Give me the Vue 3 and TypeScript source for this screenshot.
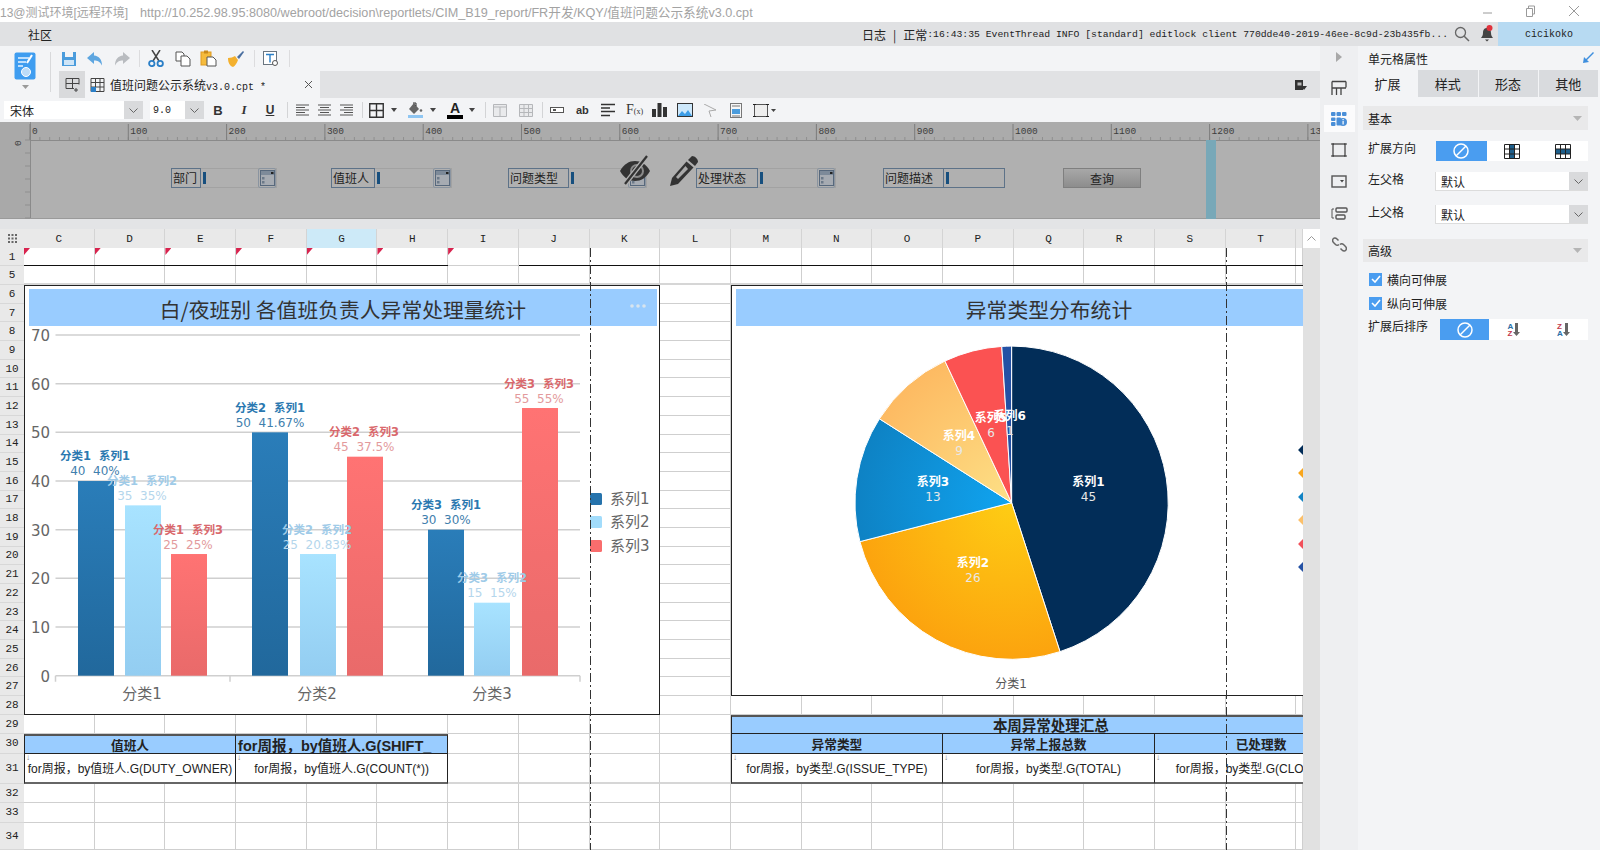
<script setup lang="ts">
const columns = ['C','D','E','F','G','H','I','J','K','L','M','N','O','P','Q','R','S','T','']
const rowLabels = [1,5,6,7,8,9,10,11,12,13,14,15,16,17,18,19,20,21,22,23,24,25,26,27,28,29,30,31,32,33,34]

interface Cell { key: string; row: number; col: number; flag: boolean; thick: boolean }
const cells: Cell[] = []
rowLabels.forEach((r, ri) => {
  columns.forEach((_c, ci) => {
    cells.push({ key: r + '-' + ci, row: ri + 2, col: ci + 2, flag: r === 1 && ci < 7, thick: r === 31 || r === 5 })
  })
})

const widgets = [
  { x: 171, label: '部门', lw: 30, w: 106, kind: 'combo' },
  { x: 331, label: '值班人', lw: 44, w: 121, kind: 'combo' },
  { x: 508, label: '问题类型', lw: 61, w: 139, kind: 'combo' },
  { x: 696, label: '处理状态', lw: 62, w: 140, kind: 'combo' },
  { x: 883, label: '问题描述', lw: 61, w: 122, kind: 'text' }
]

const rulerX = (n: number) => 30 + n * 0.983
const rulerMajors = Array.from({ length: 14 }, (_, i) => i * 100)
const rulerMinors = Array.from({ length: 131 }, (_, i) => i * 10)
const leftTicks = [0, 1, 2, 3, 4, 5, 6]

const yAxis = [70, 60, 50, 40, 30, 20, 10, 0]
const yOf = (v: number) => 675.7 - v * 4.867

interface Bar { x: number; v: number; s: number; cx: number; ly: number; t1: string; t2: string }
const bars: Bar[] = [
  { x: 78, v: 40, s: 0, cx: 95, ly: 456, t1: '分类1  系列1', t2: '40  40%' },
  { x: 125, v: 35, s: 1, cx: 142, ly: 481, t1: '分类1  系列2', t2: '35  35%' },
  { x: 171, v: 25, s: 2, cx: 188, ly: 530, t1: '分类1  系列3', t2: '25  25%' },
  { x: 252, v: 50, s: 0, cx: 270, ly: 408, t1: '分类2  系列1', t2: '50  41.67%' },
  { x: 300, v: 25, s: 1, cx: 317, ly: 530, t1: '分类2  系列2', t2: '25  20.83%' },
  { x: 347, v: 45, s: 2, cx: 364, ly: 432, t1: '分类2  系列3', t2: '45  37.5%' },
  { x: 428, v: 30, s: 0, cx: 446, ly: 505, t1: '分类3  系列1', t2: '30  30%' },
  { x: 474, v: 15, s: 1, cx: 492, ly: 578, t1: '分类3  系列2', t2: '15  15%' },
  { x: 522, v: 55, s: 2, cx: 539, ly: 384, t1: '分类3  系列3', t2: '55  55%' }
]
const labelHead = ['#2a78b0', '#9fcbe8', '#d9686c']
const labelSub = ['#3f80ad', '#b4d6ec', '#e39a9c']
const barFill = ['url(#barA)', 'url(#barB)', 'url(#barC)']

const legend = [
  { y: 499, c: '#2673ac', t: '系列1' },
  { y: 522, c: '#a2dcfb', t: '系列2' },
  { y: 546, c: '#f96d6d', t: '系列3' }
]

const cx = 1011.6
const cy = 502.7
const rad = 156.6
const pieData = [
  { v: 45, fill: '#022d58' },
  { v: 26, fill: 'url(#pieB)' },
  { v: 13, fill: 'url(#pieC)' },
  { v: 9, fill: 'url(#pieD)' },
  { v: 6, fill: '#fb5252' },
  { v: 1, fill: '#2451a4' }
]
let acc = 0
const slices = pieData.map((p) => {
  const a0 = (acc / 100) * Math.PI * 2
  acc += p.v
  const a1 = (acc / 100) * Math.PI * 2
  const x0 = cx + rad * Math.sin(a0)
  const y0 = cy - rad * Math.cos(a0)
  const x1 = cx + rad * Math.sin(a1)
  const y1 = cy - rad * Math.cos(a1)
  const large = a1 - a0 > Math.PI ? 1 : 0
  return { d: `M${cx} ${cy}L${x0.toFixed(2)} ${y0.toFixed(2)}A${rad} ${rad} 0 ${large} 1 ${x1.toFixed(2)} ${y1.toFixed(2)}Z`, fill: p.fill }
})
const pieLabels = [
  { x: 1088.5, y: 482, t: '系列1', v: '45' },
  { x: 973, y: 563, t: '系列2', v: '26' },
  { x: 933, y: 482, t: '系列3', v: '13' },
  { x: 959, y: 436, t: '系列4', v: '9' },
  { x: 991, y: 418, t: '系列5', v: '6' },
  { x: 1009.7, y: 416, t: '系列6', v: '1' }
]
const pieLegend = [
  { y: 450, c: '#022d58' },
  { y: 473, c: '#f9a61c' },
  { y: 497, c: '#1183c4' },
  { y: 520, c: '#fcc06a' },
  { y: 544, c: '#f2505a' },
  { y: 567, c: '#2451a4' }
]
</script>

<template>
  <div class="app">
    <div class="titlebar">
      <span class="t-id">13@测试环境[远程环境]</span>
      <span class="t-url">http://10.252.98.95:8080/webroot/decision\reportlets/CIM_B19_report/FR开发/KQY/值班问题公示系统v3.0.cpt</span>
      <div class="winbtns">
        <svg width="11" height="11" viewBox="0 0 11 11"><path d="M1 7h9" stroke="#9a9a9a" fill="none" /></svg>
        <svg width="11" height="12" viewBox="0 0 11 12"><path d="M1.5 3.5h6v8h-6zM3.5 3.5V1h6v8H7.5" stroke="#9a9a9a" fill="none" /></svg>
        <svg width="12" height="12" viewBox="0 0 12 12"><path d="M1 1l10 10M11 1L1 11" stroke="#9a9a9a" fill="none" /></svg>
      </div>
    </div>

    <div class="menubar">
      <span class="menu-item">社区</span>
      <div class="log">
        <span class="cjk">日志</span><span class="pipe">|</span><span class="cjk">正常</span><span class="lat">:16:43:35 EventThread INFO [standard] editlock client 770dde40-2019-46ee-8c9d-23b435fb...</span>
      </div>
      <svg class="m-search" width="16" height="16" viewBox="0 0 16 16"><circle cx="6.5" cy="6.5" r="5" fill="none" stroke="#666" stroke-width="1.3" /><path d="M10.2 10.2L15 15" stroke="#666" stroke-width="1.5" /></svg>
      <svg class="m-bell" width="16" height="18" viewBox="0 0 16 18"><path d="M8 3c-3 0-4 2.300-4 5 0 3-1.500 4-2 5h12c-.5-1-2-2-2-5 0-2.700-1-5-4-5z" fill="#444" /><path d="M6 14.500h4l-2 2z" fill="#444" /><circle cx="10.500" cy="3" r="3" fill="#e0323c" /></svg>
      <div class="user">cicikoko</div>
    </div>

    <div class="main">
      <div class="work">
        <div class="tophead">
          <div class="logo-col">
            <svg width="22" height="28" viewBox="0 0 22 28">
              <rect x="0.500" y="0.500" width="21" height="27" rx="2" fill="#3f9df0" />
              <path d="M4 6h11M4 10h8M4 14h5" stroke="#e8f4ff" stroke-width="1.600" />
              <path d="M18 3l-5 8" stroke="#fff" stroke-width="2" />
              <circle cx="12" cy="20" r="4.500" fill="#bcdcf8" stroke="#fff" />
            </svg>
            <svg class="logo-caret" width="7" height="4" viewBox="0 0 7 4"><path d="M0 0h7L3.500 4z" fill="#9a9a9a" /></svg>
          </div>
          <div class="head-right">
            <div class="toolbar">
              <svg class="ml10" width="16" height="16" viewBox="0 0 16 16"><path d="M1 1h14v14H1z" fill="#4b9cdc" /><rect x="4" y="1" width="8" height="5" fill="#f3f4f6" /><rect x="3" y="9" width="10" height="5" fill="#cfe5f7" /></svg>
              <svg class="ml10" width="16" height="14" viewBox="0 0 16 14"><path d="M7 0L0 6l7 6V8.500c3.500 0 6 1 8 5 0-6-3-9.500-8-10z" fill="#5ea6e0" /></svg>
              <svg class="ml11" width="16" height="14" viewBox="0 0 16 14"><path d="M9 0l7 6-7 6V8.500c-3.500 0-6 1-8 5 0-6 3-9.500 8-10z" fill="#b9bcc0" /></svg>
              <div class="vsep ml9"></div>
              <svg class="ml8" width="16" height="17" viewBox="0 0 16 17"><path d="M4 0l7 11M12 0L5 11" stroke="#444" stroke-width="1.500" fill="none" /><circle cx="3.800" cy="13.500" r="2.700" fill="none" stroke="#2b7fc7" stroke-width="1.800" /><circle cx="12.200" cy="13.500" r="2.700" fill="none" stroke="#2b7fc7" stroke-width="1.800" /></svg>
              <svg class="ml11" width="16" height="16" viewBox="0 0 16 16"><path d="M1 1h6l2 2v7H1z" fill="#fff" stroke="#555" /><path d="M6 5h6l3 3v7H6z" fill="#fff" stroke="#555" /></svg>
              <svg class="ml9" width="17" height="17" viewBox="0 0 17 17"><rect x="1" y="2" width="10" height="13" fill="#f5bb3c" stroke="#e09a20" /><rect x="4" y="0.500" width="4" height="3" fill="#c98a1c" /><path d="M7 7h6l3 3v6H7z" fill="#fff" stroke="#555" /></svg>
              <svg class="ml11" width="16" height="16" viewBox="0 0 16 16"><path d="M0 7c3 0 5-1 7-2l3 4c-1 3-3 6-5 7-3-1-5-4-5-9z" fill="#f3b02e" /><path d="M9 6l6-6 1 1-5 7z" fill="#4a6fa0" /></svg>
              <div class="vsep ml10"></div>
              <svg class="ml8" width="16" height="16" viewBox="0 0 16 16"><rect x="0.500" y="0.500" width="13" height="13" fill="#fff" stroke="#6a7580" /><path d="M3 3.500h8M7 3.500v8" stroke="#2b7fc7" stroke-width="1.400" /><circle cx="12" cy="12" r="2.500" fill="#fff" stroke="#555" /></svg>
              <div class="vsep ml10"></div>
            </div>
            <div class="tabrow">
              <div class="subtab">
                <svg width="15" height="15" viewBox="0 0 15 15"><path d="M1 1.500h13M1 1.500v10M7.500 1.500v10M14 1.500v6M1 6.500h13M1 11.500h8M11 11v4M9 13h4" stroke="#444" fill="none" /></svg>
              </div>
              <div class="activetab">
                <svg width="15" height="14" viewBox="0 0 15 14"><path d="M1 .5h13v13H1zM1 4.500h13M5.500 .5v13M10 .5v13M1 9h13" stroke="#444" fill="none" /><rect x="1" y="9" width="5" height="5" fill="#2b7fc7" /></svg>
                <span class="tabname">值班问题公示系统<span class="lat10">v3.0.cpt *</span></span>
                <svg class="tabx" width="9" height="9" viewBox="0 0 9 9"><path d="M1 1l7 7M8 1L1 8" stroke="#555" fill="none" /></svg>
              </div>
              <svg class="rowicon" width="12" height="11" viewBox="0 0 12 11"><rect x="0" y="0" width="8" height="10" fill="#333" /><rect x="2.500" y="2.500" width="4" height="3" fill="#bbb" /><path d="M6 6h6L9 10z" fill="#333" /></svg>
            </div>
          </div>
        </div>

        <div class="fmt">
          <div class="sel sel-font"><span>宋体</span><i class="sel-arrow"><svg width="9" height="5" viewBox="0 0 9 5"><path d="M.5.500l4 4 4-4" stroke="#666" fill="none" /></svg></i></div>
          <div class="sel sel-size"><span class="lat10">9.0</span><i class="sel-arrow"><svg width="9" height="5" viewBox="0 0 9 5"><path d="M.5.500l4 4 4-4" stroke="#666" fill="none" /></svg></i></div>
          <span class="fb fb-b">B</span><span class="fb fb-i">I</span><span class="fb fb-u">U</span>
          <div class="vsep ml4 short"></div>
          <svg class="ml8" width="13" height="12" viewBox="0 0 13 12"><path d="M0 1h13M0 3.500h9M0 6h13M0 8.500h9M0 11h13" stroke="#555" /></svg>
          <svg class="ml9" width="13" height="12" viewBox="0 0 13 12"><path d="M0 1h13M2 3.500h9M0 6h13M2 8.500h9M0 11h13" stroke="#555" /></svg>
          <svg class="ml9" width="13" height="12" viewBox="0 0 13 12"><path d="M0 1h13M4 3.500h9M0 6h13M4 8.500h9M0 11h13" stroke="#555" /></svg>
          <div class="vsep ml9 short"></div>
          <svg class="ml6" width="15" height="15" viewBox="0 0 15 15"><path d="M.75.750h13.500v13.500H.75zM7.500.750v13.500M.75 7.500h13.500" stroke="#333" stroke-width="1.400" fill="none" /></svg>
          <svg class="ml7" width="6" height="4" viewBox="0 0 6 4"><path d="M0 0h6L3 4z" fill="#444" /></svg>
          <svg class="ml11" width="15" height="16" viewBox="0 0 15 16"><path d="M6 1L1 7l5 5 5-5z" fill="#666" /><path d="M5 1h3v3" stroke="#333" fill="none" /><circle cx="13" cy="8.500" r="1.300" fill="#666" /><rect x="0" y="13" width="15" height="3" fill="#8fc6f2" /></svg>
          <svg class="ml7" width="6" height="4" viewBox="0 0 6 4"><path d="M0 0h6L3 4z" fill="#444" /></svg>
          <div class="fb-a ml11"><span>A</span><i></i></div>
          <svg class="ml6" width="6" height="4" viewBox="0 0 6 4"><path d="M0 0h6L3 4z" fill="#444" /></svg>
          <div class="vsep ml10 short"></div>
          <svg class="ml7" width="14" height="13" viewBox="0 0 14 13"><path d="M.5.500h13v12H.5zM.5 3h13M7 3v9.500" stroke="#b5b7ba" fill="#e9eaec" /></svg>
          <svg class="ml12" width="14" height="13" viewBox="0 0 14 13"><path d="M.5.500h13v12H.5zM.5 4.500h13M.5 8.500h13M5 .5v12M9.500.500v12" stroke="#b5b7ba" fill="#e9eaec" /></svg>
          <div class="vsep ml9 short"></div>
          <svg class="ml7" width="14" height="6" viewBox="0 0 14 6"><rect x=".5" y=".5" width="13" height="5" fill="#fff" stroke="#555" /><rect x="3" y="2" width="3" height="2" fill="#555" /></svg>
          <span class="fb-ab ml12">ab</span>
          <svg class="ml13" width="14" height="14" viewBox="0 0 14 14"><path d="M0 1.500h14M0 5h9M0 8.500h14M0 12.500h9" stroke="#333" stroke-width="1.600" /></svg>
          <span class="fb-fx ml11">F<small>(x)</small></span>
          <svg class="ml10" width="15" height="14" viewBox="0 0 15 14"><path d="M0 6h4v8H0zM5.500 0h4v14h-4zM11 4h4v10h-4z" fill="#333" /></svg>
          <svg class="ml10" width="16" height="14" viewBox="0 0 16 14"><rect width="16" height="14" fill="#333" /><rect x="1" y="1" width="14" height="12" fill="#cde8fb" /><path d="M1 13l4-5 3 3 3-4 4 6z" fill="#3d9de6" /></svg>
          <svg class="ml10" width="14" height="13" viewBox="0 0 14 13"><path d="M1 0l12 6-7 1v0L8 13" stroke="#aaa" fill="none" /></svg>
          <svg class="ml13" width="12" height="15" viewBox="0 0 12 15"><rect x=".5" y=".5" width="11" height="14" fill="#f6f6f6" stroke="#777" /><rect x="2" y="6" width="8" height="5" fill="#4b9cdc" /><path d="M2 3h8M2 13h8" stroke="#777" /></svg>
          <svg class="ml11" width="16" height="15" viewBox="0 0 16 15"><rect x="1.500" y="1.500" width="13" height="12" fill="#eee" stroke="#555" /><path d="M0 1.500h3M13 1.500h3M0 13.500h3M13 13.500h3" stroke="#222" /></svg>
          <svg class="ml2" width="5" height="3" viewBox="0 0 5 3"><path d="M0 0h5L2.500 3z" fill="#444" /></svg>
        </div>

        <div class="pane">
          <svg class="ruler" width="1320" height="97" viewBox="0 122 1320 97">
            <rect x="0" y="122" width="30" height="97" fill="#a9a9a9" />
            <rect x="30" y="122" width="1290" height="18" fill="#ababab" />
            <path d="M30 140.500H1320M30.500 122V219" stroke="#8a8a8a" fill="none" />
            <path d="M0 218.500H1320" stroke="#9a9a9a" />
            <g v-for="n in rulerMinors" :key="n">
              <line :x1="rulerX(n)" :x2="rulerX(n)" y1="137" y2="140" stroke="#8f8f8f" />
            </g>
            <g v-for="n in rulerMajors" :key="'m' + n">
              <line :x1="rulerX(n)" :x2="rulerX(n)" y1="124" y2="140" stroke="#7d7d7d" />
              <text :x="rulerX(n) + 2" y="134" class="ruler-t">{{ n }}</text>
            </g>
            <g v-for="t in leftTicks" :key="'l' + t">
              <line x1="25" x2="30" :y1="140 + t * 13" :y2="140 + t * 13" stroke="#8f8f8f" />
            </g>
            <text class="ruler-t" transform="translate(21 146) rotate(-90)">0</text>
            <rect x="1206" y="140" width="10" height="79" fill="#78a8b8" />
          </svg>
          <div v-for="w in widgets" :key="w.label" class="widget" :style="{ left: w.x + 'px', width: w.w + 'px' }">
            <div class="w-label" :style="{ width: w.lw + 'px' }">{{ w.label }}</div>
            <div class="w-box" :class="{ 'w-text': w.kind === 'text' }">
              <i class="w-cursor"></i>
              <div v-if="w.kind === 'combo'" class="w-icon">
                <svg width="15" height="16" viewBox="0 0 15 16"><rect x=".5" y=".5" width="14" height="15" fill="#a6abb2" stroke="#57687c" /><rect x="1" y="1" width="13" height="4" fill="#7d8a99" /><rect x="11" y="2" width="2.500" height="2" fill="#222" /><rect x="2" y="7" width="2.500" height="2.500" fill="#6c7a89" /><rect x="2" y="11" width="2.500" height="2.500" fill="#6c7a89" /></svg>
              </div>
            </div>
          </div>
          <button class="query">查询</button>
          <svg class="eye" width="32" height="30" viewBox="0 0 32 30"><path d="M1 16c4-7 9-10 15-10s11 3 15 10c-4 7-9 10-15 10S5 23 1 16z" fill="#333" /><circle cx="18" cy="16" r="6" fill="none" stroke="#8a8a8a" stroke-width="2" /><path d="M28 1L6 29" stroke="#b0b0b0" stroke-width="5" /><path d="M28 1L6 29" stroke="#333" stroke-width="2.200" /></svg>
          <svg class="pencil" width="29" height="31" viewBox="0 0 29 31"><path d="M22 1c3 0 6 3 6 6l-3 4-7-6z" fill="#333" /><path d="M16.500 6.500l7 6L8 29l-8 2 2-8z" fill="#333" /><path d="M15.500 11L6 22l2 2 10-10z" fill="#a9a9a9" /></svg>
        </div>

        <div class="gap"></div>

        <div class="sheetwrap">
          <div class="sheet">
            <div class="corner"><svg width="9" height="9" viewBox="0 0 9 9"><path d="M0 1h2M3.500 1h2M7 1h2M0 4.500h2M3.500 4.500h2M7 4.500h2M0 8h2M3.500 8h2M7 8h2" stroke="#666" stroke-width="2" /></svg></div>
            <div v-for="(c, i) in columns" :key="'c' + i" class="colh" :class="{ 'col-on': c === 'G' }" :style="{ gridColumn: i + 2 }">{{ c }}</div>
            <div v-for="(r, i) in rowLabels" :key="'r' + r" class="rowh" :style="{ gridRow: i + 2 }">{{ r }}</div>
            <div
              v-for="c in cells"
              :key="c.key"
              class="cell"
              :class="{ thick: c.thick }"
              :style="{ gridRow: c.row, gridColumn: c.col }"
            >
              <i v-if="c.flag" class="flag"></i>
            </div>

            <div class="hline hl-a"></div>
            <div class="hline hl-b"></div>

            <div class="chart chart-bar">
              <svg width="634" height="428" viewBox="25 286 634 428">
                <defs>
                  <linearGradient id="barA" x1="0" y1="0" x2="0" y2="1"><stop offset="0" stop-color="#2a7db9" /><stop offset="1" stop-color="#21689c" /></linearGradient>
                  <linearGradient id="barB" x1="0" y1="0" x2="0" y2="1"><stop offset="0" stop-color="#a8e3ff" /><stop offset="1" stop-color="#93cdf1" /></linearGradient>
                  <linearGradient id="barC" x1="0" y1="0" x2="0" y2="1"><stop offset="0" stop-color="#ff7373" /><stop offset="1" stop-color="#e96a6a" /></linearGradient>
                </defs>
                <rect x="29" y="289" width="628" height="37" fill="#99ccff" />
                <text x="343" y="318" class="chart-title" text-anchor="middle">白/夜班别 各值班负责人异常处理量统计</text>
                <g fill="#d8e4ee"><circle cx="632" cy="306" r="1.800" /><circle cx="638" cy="306" r="1.800" /><circle cx="644" cy="306" r="1.800" /></g>
                <g v-for="v in yAxis" :key="'g' + v">
                  <line x1="55.500" x2="580" :y1="yOf(v)" :y2="yOf(v)" stroke="#cfcfcf" stroke-width="1.500" />
                  <text x="50" :y="yOf(v) + 6" class="axis-t" text-anchor="end">{{ v }}</text>
                </g>
                <path d="M55.500 675.700v6M230 675.700v6M580 675.700v6" stroke="#cfcfcf" stroke-width="1.500" />
                <rect v-for="b in bars" :key="'b' + b.t1" :x="b.x" :y="yOf(b.v)" width="36" :height="b.v * 4.867" :fill="barFill[b.s]" />
                <g v-for="b in bars" :key="'l' + b.t1">
                  <text :x="b.cx" :y="b.ly + 4" class="bar-h" text-anchor="middle" :fill="labelHead[b.s]" xml:space="preserve">{{ b.t1 }}</text>
                  <text :x="b.cx" :y="b.ly + 19" class="bar-s" text-anchor="middle" :fill="labelSub[b.s]" xml:space="preserve">{{ b.t2 }}</text>
                </g>
                <text x="142" y="699" class="axis-t" text-anchor="middle">分类1</text>
                <text x="317" y="699" class="axis-t" text-anchor="middle">分类2</text>
                <text x="492" y="699" class="axis-t" text-anchor="middle">分类3</text>
                <g v-for="l in legend" :key="l.t">
                  <rect x="590" :y="l.y - 6" width="12" height="12" rx="1.500" :fill="l.c" />
                  <text x="610" :y="l.y + 5" class="axis-t">{{ l.t }}</text>
                </g>
              </svg>
            </div>

            <div class="chart chart-pie">
              <svg width="572" height="409" viewBox="732 286 572 409">
                <defs>
                  <radialGradient id="pieB" gradientUnits="userSpaceOnUse" :cx="cx" :cy="cy" r="157"><stop offset="0" stop-color="#fecd14" /><stop offset="1" stop-color="#fca30e" /></radialGradient>
                  <radialGradient id="pieC" gradientUnits="userSpaceOnUse" :cx="cx" :cy="cy" r="157"><stop offset="0" stop-color="#10a4f0" /><stop offset="1" stop-color="#0e82c4" /></radialGradient>
                  <radialGradient id="pieD" gradientUnits="userSpaceOnUse" :cx="cx" :cy="cy" r="157"><stop offset="0" stop-color="#fde086" /><stop offset="1" stop-color="#fdba62" /></radialGradient>
                </defs>
                <rect x="736" y="289" width="570" height="37" fill="#99ccff" />
                <text x="1049" y="318" class="chart-title" text-anchor="middle">异常类型分布统计</text>
                <path v-for="s in slices" :key="s.d" :d="s.d" :fill="s.fill" stroke="#fff" stroke-width="1" />
                <g v-for="l in pieLabels" :key="l.t">
                  <text :x="l.x" :y="l.y + 4" class="pie-h" text-anchor="middle">{{ l.t }}</text>
                  <text :x="l.x" :y="l.y + 19" class="pie-v" text-anchor="middle">{{ l.v }}</text>
                </g>
                <text x="1011" y="688" class="pie-x" text-anchor="middle">分类1</text>
                <rect v-for="p in pieLegend" :key="p.y" x="1299.500" :y="p.y - 3.500" width="7" height="7" :fill="p.c" :transform="`rotate(45 1303 ${p.y})`" />
              </svg>
            </div>

            <div class="tc thead la">值班人</div>
            <div class="tc thead lb">for周报，by值班人.G(SHIFT_</div>
            <div class="tc tbody lc"><i class="down">↓</i>for周报，by值班人.G(DUTY_OWNER)</div>
            <div class="tc tbody ld"><i class="down">↓</i>for周报，by值班人.G(COUNT(*))</div>

            <div class="tc thead ra"><span class="clipwide">本周异常处理汇总</span></div>
            <div class="tc thead rb">异常类型</div>
            <div class="tc thead rc">异常上报总数</div>
            <div class="tc thead rd"><span class="clipin">已处理数</span></div>
            <div class="tc tbody re"><i class="down">↓</i>for周报，by类型.G(ISSUE_TYPE)</div>
            <div class="tc tbody rf"><i class="down">↓</i>for周报，by类型.G(TOTAL)</div>
            <div class="tc tbody rg"><i class="down">↓</i><span class="clipbody">for周报，by类型.G(CLOSED)</span></div>

            <div class="dash dash-a"></div>
            <div class="dash dash-b"></div>
          </div>
          <div class="vscroll">
            <div class="vs-up"><svg width="9" height="5" viewBox="0 0 9 5"><path d="M.5 4.500l4-4 4 4" stroke="#999" fill="none" /></svg></div>
          </div>
        </div>
      </div>

      <div class="iconcol">
        <svg class="ic-top" width="6" height="10" viewBox="0 0 6 10"><path d="M0 0l6 5-6 5z" fill="#a8a8a8" /></svg>
        <div class="ic"><svg width="16" height="16" viewBox="0 0 16 16"><path d="M1 1.500h14M1 1.500V15M15 1.500v6M1 8h14M5.500 8v7M10 8v7" stroke="#444" stroke-width="1.300" fill="none" /></svg></div>
        <div class="ic ic-on"><svg width="16" height="16" viewBox="0 0 16 16"><g fill="#4a8fd8"><rect x="0" y="1" width="4.500" height="4" rx="1" /><rect x="5.500" y="1" width="4.500" height="4" rx="1" /><rect x="11" y="1" width="4.500" height="4" rx="1" /><rect x="0" y="6.500" width="4.500" height="3.500" rx="1" /><rect x="0" y="11" width="4.500" height="4" rx="1" /><rect x="5.500" y="6.500" width="4.500" height="8" rx="1" /><circle cx="12" cy="11" r="4" /></g><rect x="11.500" y="10" width="1.200" height="3.500" fill="#fff" /><rect x="11.500" y="8" width="1.200" height="1.200" fill="#fff" /></svg></div>
        <div class="ic"><svg width="16" height="16" viewBox="0 0 16 16"><rect x="2" y="2" width="12" height="12" fill="none" stroke="#555" stroke-width="1.400" /><path d="M0 2h3M13 2h3M0 14h3M13 14h3" stroke="#333" /></svg></div>
        <div class="ic"><svg width="16" height="13" viewBox="0 0 16 13"><rect x="1" y="1" width="14" height="11" fill="none" stroke="#555" stroke-width="1.400" /><path d="M9 5h4l-2 2.500z" fill="#444" /></svg></div>
        <div class="ic"><svg width="17" height="13" viewBox="0 0 17 13"><path d="M3 2H1v9h2" stroke="#555" fill="none" /><rect x="5" y="1" width="11" height="4" rx="1" fill="none" stroke="#555" stroke-width="1.400" /><rect x="5" y="8" width="9" height="4" rx="1" fill="none" stroke="#555" stroke-width="1.400" /></svg></div>
        <div class="ic"><svg width="15" height="15" viewBox="0 0 15 15"><path d="M6.500 3.500L5 2C3.500.5 1.500 1 1 2s-.5 2.500.5 3.500L3.500 7.500c1 1 2.500 1 3.500 0M8.500 11.500l1.500 1.500c1.500 1.500 3.500 1 4 0s.5-2.500-.5-3.500L11.500 7.500c-1-1-2.500-1-3.500 0" fill="none" stroke="#666" stroke-width="1.500" /></svg></div>
      </div>

      <div class="panel">
        <div class="p-head">
          <span>单元格属性</span>
          <svg width="12" height="12" viewBox="0 0 12 12"><path d="M11 0L4 7l-2-2-1 6 6-1-2-2 7-7z" fill="#3f8fde" /></svg>
        </div>
        <div class="p-tabs">
          <div class="p-tab on">扩展</div>
          <div class="p-tab">样式</div>
          <div class="p-tab">形态</div>
          <div class="p-tab">其他</div>
        </div>
        <div class="p-sec">
          <span>基本</span>
          <svg width="9" height="5" viewBox="0 0 9 5"><path d="M0 0h9L4.500 5z" fill="#b5b5b5" /></svg>
        </div>
        <div class="p-row r1">
          <span class="p-lab">扩展方向</span>
          <div class="seg seg-a">
            <div class="seg-i on"><svg width="16" height="16" viewBox="0 0 16 16"><circle cx="8" cy="8" r="7" fill="none" stroke="#fff" stroke-width="1.500" /><path d="M3 13L13 3" stroke="#fff" stroke-width="1.500" /></svg></div>
            <div class="seg-i"><svg width="16" height="15" viewBox="0 0 16 15"><rect x="5" y="0" width="6" height="15" fill="#1d5f8c" /><path d="M.5.500h15v14H.5zM.5 5h15M.5 10h15M5.500.500v14M10.500.500v14" stroke="#222" fill="none" /></svg></div>
            <div class="seg-i"><svg width="16" height="15" viewBox="0 0 16 15"><rect x="0" y="5" width="16" height="5" fill="#1d5f8c" /><path d="M.5.500h15v14H.5zM.5 5h15M.5 10h15M5.500.500v14M10.500.500v14" stroke="#222" fill="none" /></svg></div>
          </div>
        </div>
        <div class="p-row r2">
          <span class="p-lab">左父格</span>
          <div class="p-sel"><span>默认</span><i><svg width="9" height="5" viewBox="0 0 9 5"><path d="M.5.500l4 4 4-4" stroke="#666" fill="none" /></svg></i></div>
        </div>
        <div class="p-row r3">
          <span class="p-lab">上父格</span>
          <div class="p-sel"><span>默认</span><i><svg width="9" height="5" viewBox="0 0 9 5"><path d="M.5.500l4 4 4-4" stroke="#666" fill="none" /></svg></i></div>
        </div>
        <div class="p-sec s2">
          <span>高级</span>
          <svg width="9" height="5" viewBox="0 0 9 5"><path d="M0 0h9L4.500 5z" fill="#b5b5b5" /></svg>
        </div>
        <label class="p-chk c1"><i class="box"><svg width="10" height="8" viewBox="0 0 10 8"><path d="M1 4l3 3 5-6" stroke="#fff" stroke-width="1.600" fill="none" /></svg></i>横向可伸展</label>
        <label class="p-chk c2"><i class="box"><svg width="10" height="8" viewBox="0 0 10 8"><path d="M1 4l3 3 5-6" stroke="#fff" stroke-width="1.600" fill="none" /></svg></i>纵向可伸展</label>
        <div class="p-row r4">
          <span class="p-lab">扩展后排序</span>
          <div class="seg seg-b">
            <div class="seg-i on"><svg width="16" height="16" viewBox="0 0 16 16"><circle cx="8" cy="8" r="7" fill="none" stroke="#fff" stroke-width="1.500" /><path d="M3 13L13 3" stroke="#fff" stroke-width="1.500" /></svg></div>
            <div class="seg-i sort"><span class="az"><b class="up">A</b><b class="lo">Z</b></span><svg width="7" height="13" viewBox="0 0 7 13"><path d="M2 0h3v9h2l-3.500 4L0 9h2z" fill="#666" /></svg></div>
            <div class="seg-i sort"><span class="az"><b class="lo">Z</b><b class="up">A</b></span><svg width="7" height="13" viewBox="0 0 7 13"><path d="M2 0h3v9h2l-3.500 4L0 9h2z" fill="#666" /></svg></div>
          </div>
        </div>
      </div>
    </div>
  </div>
</template>

<style>
html, body { margin: 0; padding: 0; background: #f3f4f6; overflow: hidden; }
</style>

<style scoped>
.app {
  width: 1600px; height: 850px; overflow: hidden; display: flex; flex-direction: column;
  font-family: "Noto Sans CJK SC", "Noto Sans", sans-serif; font-size: 12px; color: #333; background: #f3f4f6;
}
i { font-style: normal; }
.ml2 { margin-left: 2px; } .ml4 { margin-left: 4px; } .ml6 { margin-left: 6px; } .ml7 { margin-left: 7px; }
.ml8 { margin-left: 8px; } .ml9 { margin-left: 9px; } .ml10 { margin-left: 10px; } .ml11 { margin-left: 11px; }
.ml12 { margin-left: 12px; } .ml13 { margin-left: 13px; }

.titlebar { height: 22px; background: #fff; display: flex; align-items: center; color: #a3a3a3; flex: none; white-space: nowrap; }
.t-id { width: 140px; overflow: hidden; font-size: 12px; font-family: "Liberation Sans", "Noto Sans CJK SC", sans-serif; }
.t-url { font-size: 12.65px; font-family: "Liberation Sans", "Noto Sans CJK SC", sans-serif; }
.winbtns { margin-left: auto; display: flex; gap: 32px; padding-right: 20px; align-items: center; }

.menubar { height: 24px; background: #e0e1e3; display: flex; align-items: center; flex: none; }
.menu-item { margin-left: 28px; font-size: 12px; color: #222; }
.log { margin-left: auto; display: flex; align-items: center; color: #222; white-space: nowrap; }
.log .cjk { font-size: 12px; }
.log .pipe { margin: 0 7px; font-size: 12px; }
.log .lat { font-family: "Liberation Mono", monospace; font-size: 9.75px; }
.m-search { margin-left: 6px; }
.m-bell { margin-left: 9px; }
.user { width: 102px; margin-left: 3px; height: 24px; background: #b7daf2; display: flex; align-items: center; justify-content: center; font-family: "Liberation Mono", monospace; font-size: 10px; color: #222; }

.main { flex: 1; display: flex; min-height: 0; }
.work { width: 1320px; display: flex; flex-direction: column; flex: none; }

.tophead { height: 52px; display: flex; flex: none; background: #f3f4f6; }
.logo-col { width: 51px; border-right: 1px solid #d8d9db; margin: 6px 0; height: 40px; box-sizing: border-box; display: flex; flex-direction: column; align-items: center; gap: 4px; flex: none; }
.logo-caret { margin-top: 1px; }
.head-right { flex: 1; display: flex; flex-direction: column; min-width: 0; }
.toolbar { height: 25px; display: flex; align-items: center; flex: none; }
.vsep { width: 1px; height: 17px; background: #dcdcde; flex: none; }
.vsep.short { height: 16px; background: #d3d4d6; }
.tabrow { flex: 1; margin-left: 8px; background: #e1e2e4; display: flex; align-items: stretch; position: relative; }
.subtab { width: 26px; background: #d9dadc; display: flex; align-items: center; justify-content: center; }
.activetab { width: 235px; background: #f3f4f6; display: flex; align-items: center; padding-left: 5px; box-sizing: border-box; }
.tabname { margin-left: 5px; font-size: 12px; color: #222; }
.lat10 { font-family: "Liberation Mono", monospace; font-size: 10px; }
.tabx { margin-left: auto; margin-right: 7px; }
.rowicon { position: absolute; right: 13px; top: 9px; }

.fmt { height: 24px; display: flex; align-items: center; padding-left: 4px; background: #f3f4f6; flex: none; }
.sel { height: 18px; background: #fff; display: flex; align-items: center; justify-content: space-between; font-size: 12px; color: #222; box-sizing: border-box; padding-left: 6px; flex: none; }
.sel-font { width: 139px; }
.sel-size { width: 54px; margin-left: 7px; padding-left: 3px; }
.sel-arrow { width: 19px; height: 18px; background: #d9dadc; display: flex; align-items: center; justify-content: center; }
.fb { width: 26px; text-align: center; font-family: "Liberation Serif", serif; font-size: 13px; color: #333; flex: none; }
.fb-b { margin-left: 1px; font-family: "Liberation Sans", sans-serif; font-weight: 700; }
.fb-i { font-style: italic; font-weight: 700; }
.fb-u { text-decoration: underline; font-family: "Liberation Sans", sans-serif; font-weight: 700; font-size: 12px; }
.fb-a { width: 16px; display: flex; flex-direction: column; align-items: center; font-family: "Liberation Sans", sans-serif; font-weight: 700; font-size: 14px; line-height: 13px; color: #222; }
.fb-a i { display: block; width: 16px; height: 4px; background: #000; }
.fb-ab { width: 12px; font-family: "Liberation Sans", sans-serif; font-weight: 700; font-size: 11px; color: #333; }
.fb-fx { width: 16px; font-family: "Liberation Serif", serif; font-size: 14px; color: #333; white-space: nowrap; }
.fb-fx small { font-size: 8px; }

.pane { height: 97px; flex: none; background: #b0b0b0; position: relative; }
.ruler { display: block; }
.ruler-t { font-family: "Liberation Mono", monospace; font-size: 9.5px; fill: #3d3d3d; }
.widget { position: absolute; top: 46px; height: 20px; display: flex; }
.w-label { height: 20px; box-sizing: border-box; border: 1px solid #5d7288; font-size: 12px; line-height: 17px; padding-left: 1px; color: #222; white-space: nowrap; overflow: hidden; flex: none; }
.w-box { flex: 1; border: 1px solid #a2a2a2; border-left: 0; position: relative; display: flex; justify-content: flex-end; }
.w-text { border-color: #5d7288; }
.w-cursor { position: absolute; left: 2px; top: 3px; width: 2.5px; height: 12px; background: #174f7e; }
.w-icon { width: 18px; margin: -1px 0; height: 20px; border: 1px solid #8a94a0; border-radius: 2px; display: flex; align-items: center; justify-content: center; box-sizing: border-box; }
.query { position: absolute; left: 1063px; top: 46px; width: 78px; height: 20px; border: 1px solid #7f7f7f; background: linear-gradient(#a8a8a8, #8d8d8d); padding: 0; font: 12px "Noto Sans CJK SC", sans-serif; color: #222; }
.eye { position: absolute; left: 619px; top: 33px; }
.pencil { position: absolute; left: 670px; top: 33px; }

.gap { height: 10px; background: #e3e4e6; flex: none; }

.sheetwrap { flex: 1; display: flex; min-height: 0; }
.sheet {
  width: 1303px; height: 621px; flex: none; overflow: hidden; background: #fff; display: grid;
  grid-template-columns: 24px repeat(18, 70.7px) 6.4px;
  grid-template-rows: 19px 18px 19px repeat(23, 18.7px) 19px 20px 30px 19px 20px 27px;
}
.corner { grid-row: 1; grid-column: 1; background: #e9e9e9; display: flex; align-items: center; justify-content: center; }
.colh { grid-row: 1; background: #e9e9e9; border-right: 1px solid #d4d4d4; box-sizing: border-box; display: flex; align-items: center; justify-content: center; font-family: "Liberation Mono", monospace; font-size: 11px; color: #222; }
.colh.col-on { background: #cdeaf8; }
.rowh { grid-column: 1; background: #e9e9e9; border-bottom: 1px solid #d8d8d8; box-sizing: border-box; display: flex; align-items: center; justify-content: center; font-family: "Liberation Mono", monospace; font-size: 11px; color: #222; min-height: 0; overflow: hidden; }
.cell { border-right: 1px solid #cfcfcf; border-bottom: 1px solid #cfcfcf; box-sizing: border-box; position: relative; min-height: 0; min-width: 0; }
.cell.thick { border-bottom: 2px solid #d6d6d6; }
.flag { position: absolute; left: 0; top: 0; width: 6px; height: 7px; background: #d8234e; clip-path: polygon(0 0, 100% 0, 0 100%); }

.hline { border-bottom: 1px solid #111; grid-row: 2; z-index: 1; }
.hl-a { grid-column: 2 / 8; }
.hl-b { grid-column: 9 / 21; }

.chart { background: #fff; box-sizing: border-box; overflow: hidden; min-height: 0; min-width: 0; z-index: 1; }
.chart svg { display: block; }
.chart-bar { grid-column: 2 / 11; grid-row: 4 / 27; border: 1px solid #222; }
.chart-pie { grid-column: 12 / 21; grid-row: 4 / 26; border: 1px solid #222; border-right: 0; }
.chart-title { font-family: "Noto Sans CJK SC", sans-serif; font-size: 20.8px; fill: #333; }
.axis-t { font-family: "DejaVu Sans", "Noto Sans CJK SC", sans-serif; font-size: 15px; fill: #666; }
.bar-h { font-family: "DejaVu Sans", "Noto Sans CJK SC", sans-serif; font-size: 11.5px; font-weight: 700; white-space: pre; }
.bar-s { font-family: "DejaVu Sans", "Noto Sans CJK SC", sans-serif; font-size: 12px; white-space: pre; }
.pie-h { font-family: "DejaVu Sans", "Noto Sans CJK SC", sans-serif; font-size: 12px; font-weight: 700; fill: #fff; }
.pie-v { font-family: "DejaVu Sans", "Noto Sans CJK SC", sans-serif; font-size: 12px; fill: #e8e8e8; }
.pie-x { font-family: "DejaVu Sans", "Noto Sans CJK SC", sans-serif; font-size: 12px; fill: #555; }

.tc { box-sizing: border-box; border: solid #222; border-width: 0 1px 1px 0; display: flex; align-items: center; justify-content: center; position: relative; white-space: nowrap; overflow: hidden; color: #222; min-width: 0; min-height: 0; z-index: 1; }
.thead { background: #99ccff; font-weight: 700; font-size: 12.7px; }
.tbody { background: #fff; font-family: "Liberation Sans", "Noto Sans CJK SC", sans-serif; font-size: 12px; border-bottom: 2px solid #666; }
.down { position: absolute; left: 1px; top: -1px; font-size: 8px; color: #777; line-height: 10px; }
.la { grid-row: 28; grid-column: 2 / 5; border-top: 2px solid #555; border-left-width: 1px; }
.lb { grid-row: 28; grid-column: 5 / 8; border-top: 2px solid #555; justify-content: flex-start; padding-left: 2px; font-size: 14.5px; font-family: "Liberation Sans", "Noto Sans CJK SC", sans-serif; }
.lc { grid-row: 29; grid-column: 2 / 5; border-left-width: 1px; }
.ld { grid-row: 29; grid-column: 5 / 8; }
.ra { grid-row: 27; grid-column: 12 / 21; border-right: 0; border-left-width: 1px; border-top: 2px solid #555; justify-content: flex-start; font-size: 14.5px; }
.rb { grid-row: 28; grid-column: 12 / 15; border-left-width: 1px; }
.rc { grid-row: 28; grid-column: 15 / 18; }
.rd { grid-row: 28; grid-column: 18 / 21; border-right: 0; justify-content: flex-start; }
.re { grid-row: 29; grid-column: 12 / 15; border-left-width: 1px; }
.rf { grid-row: 29; grid-column: 15 / 18; }
.rg { grid-row: 29; grid-column: 18 / 21; border-right: 0; justify-content: flex-start; }
.clipin { display: block; width: 212px; flex: none; text-align: center; }
.clipbody { display: block; width: 198px; flex: none; text-align: center; }
.clipwide { display: block; width: 638px; flex: none; text-align: center; }

.dash {
  width: 1px; grid-row: 2 / -1; justify-self: start; z-index: 2;
  background: repeating-linear-gradient(to bottom, #333 0 9px, transparent 9px 12px, #333 12px 14px, transparent 14px 17px);
}
.dash-a { grid-column: 10; }
.dash-b { grid-column: 19; }

.vscroll { width: 17px; flex: none; background: #e1e1e1; }
.vs-up { height: 19px; background: #fff; display: flex; align-items: center; justify-content: center; }

.iconcol { width: 38px; flex: none; background: #eeeff1; display: flex; flex-direction: column; align-items: center; }
.ic-top { margin-top: 6px; margin-bottom: 12px; }
.ic { width: 31px; height: 27px; display: flex; align-items: center; justify-content: center; margin-bottom: 4.4px; }
.ic-on { background: #fbfbfc; }

.panel { flex: 1; background: #f3f4f6; display: flex; flex-direction: column; padding-bottom: 0; }
.p-head { height: 24px; display: flex; align-items: center; justify-content: space-between; padding: 0 6px 0 10px; font-size: 12px; color: #222; }
.p-tabs { height: 27px; display: flex; gap: 1px; width: 240px; }
.p-tab { flex: 1; display: flex; align-items: center; justify-content: center; background: #d9dbde; font-size: 13px; color: #222; }
.p-tab.on { background: #f3f4f6; }
.p-sec { margin: 9px 12px 0 5px; height: 24px; background: #e9e9ea; display: flex; align-items: center; justify-content: space-between; padding: 0 6px 0 5px; font-size: 12px; color: #222; }
.s2 { margin-top: 15px; height: 23px; }
.p-row { display: flex; align-items: flex-start; margin: 0 12px 0 10px; justify-content: space-between; }
.p-lab { font-size: 12px; line-height: 14px; color: #222; white-space: nowrap; }
.r1 { margin-top: 11px; height: 20px; }
.r2 { margin-top: 11px; height: 19px; }
.r3 { margin-top: 14px; height: 19px; }
.r4 { margin-top: 9px; height: 21px; }
.seg { display: flex; background: #fff; height: 100%; }
.seg-a { width: 152px; }
.seg-b { width: 148px; }
.seg-i { flex: 1; display: flex; align-items: center; justify-content: center; }
.seg-i.on { background: #4a9df0; }
.az { display: flex; flex-direction: column; font: 700 8px/7px "Liberation Sans", sans-serif; }
.az .up { color: #2a6fa8; }
.az .lo { color: #c23a4c; }
.p-sel { width: 153px; height: 19px; background: #fff; border-left: 1px solid #dcdcdc; border-bottom: 1px solid #dcdcdc; box-sizing: border-box; display: flex; align-items: center; justify-content: space-between; padding-left: 5px; font-size: 12px; color: #222; }
.p-sel i { width: 19px; height: 100%; background: #d9dadc; display: flex; align-items: center; justify-content: center; }
.p-chk { display: flex; align-items: center; margin-left: 11px; font-size: 12px; color: #222; height: 14px; white-space: nowrap; }
.c1 { margin-top: 10px; }
.c2 { margin-top: 10px; }
.box { width: 13px; height: 13px; background: #4a9df0; display: flex; align-items: center; justify-content: center; margin-right: 5px; flex: none; }
</style>
